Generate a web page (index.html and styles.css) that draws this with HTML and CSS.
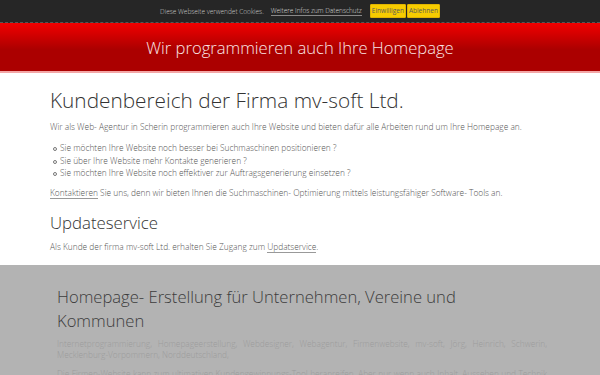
FILE: index.html
```html
<!DOCTYPE html>
<html lang="de">
<head>
    <meta charset="UTF-8">
    <meta name="viewport" content="width=device-width, initial-scale=1.0">
    <title>mv-soft Ltd. - Kundenbereich</title>
    <link rel="stylesheet" href="styles.css">
</head>
<body>
    <div class="cookie-bar">
        <span>Diese Webseite verwendet Cookies.</span>
        <a href="#" class="cookie-link">Weitere Infos zum Datenschutz</a>
        <span class="cookie-buttons">
            <button class="cookie-btn">Einwilligen</button>
            <button class="cookie-btn">Ablehnen</button>
        </span>
    </div>

    <header class="banner">
        <p class="banner-title">Wir programmieren auch Ihre Homepage</p>
    </header>

    <main class="content">
        <h1>Kundenbereich der Firma mv-soft Ltd.</h1>
        <p class="intro">Wir als Web- Agentur in Scherin programmieren auch Ihre Website und bieten dafür alle Arbeiten rund um Ihre Homepage an.</p>
        <ul class="points">
            <li>Sie möchten Ihre Website noch besser bei Suchmaschinen positionieren ?</li>
            <li>Sie über Ihre Website mehr Kontakte generieren ?</li>
            <li>Sie möchten Ihre Website noch effektiver zur Auftragsgenerierung einsetzen ?</li>
        </ul>
        <p><a href="#">Kontaktieren</a> Sie uns, denn wir bieten Ihnen die Suchmaschinen- Optimierung mittels leistungsfähiger Software- Tools an.</p>
        <h2>Updateservice</h2>
        <p>Als Kunde der firma mv-soft Ltd. erhalten Sie Zugang zum <a href="#">Updatservice</a>.</p>
    </main>

    <section class="info">
        <h2>Homepage- Erstellung für Unternehmen, Vereine und Kommunen</h2>
        <p>Internetprogrammierung, Homepageerstellung, Webdesigner, Webagentur, Firmenwebsite, mv-soft, Jörg, Heinrich, Schwerin, Mecklenburg-Vorpommern, Norddeutschland,</p>
        <p>Die Firmen-Website kann zum ultimativen Kundengewinnungs-Tool heranreifen. Aber nur wenn auch Inhalt, Aussehen und Technik stimmen.</p>
    </section>
</body>
</html>
```

FILE: styles.css
```css
body {
    margin: 0;
    font-family: 'Open Sans', sans-serif;
    font-weight: 300;
    color: #555;
    background: #fff;
}

.cookie-bar {
    background-color: #262626;
    color: #ccc;
    font-size: 6.5px;
    height: 22px;
    display: flex;
    justify-content: center;
    align-items: center;
    gap: 7px;
    border-bottom: 1px dashed #555;
}

.cookie-link {
    color: #ddd;
    text-decoration: none;
    border-bottom: 1px solid #888;
}

.cookie-buttons {
    display: flex;
    gap: 1px;
    margin-left: 1px;
}

.cookie-btn {
    background-color: #f7cc00;
    color: #5a5a5a;
    border: 1px solid #e0b400;
    font-family: 'Open Sans', sans-serif;
    font-size: 6.5px;
    padding: 2px 1px;
    line-height: 8px;
    border-radius: 1px;
}

.banner {
    height: 48px;
    background: linear-gradient(#f20000, #ab0000 55%, #ab0000);
    border-bottom: 2px solid #f3a6a6;
    display: flex;
    justify-content: center;
    align-items: center;
}

.banner-title {
    margin: 0;
    color: #fbe6e6;
    font-size: 16.6px;
    font-weight: 300;
}

.content {
    padding: 14px 50px 12px;
    font-size: 8.35px;
    line-height: 12px;
}

.content h1 {
    color: #333;
    font-size: 20.8px;
    line-height: 26px;
    font-weight: 300;
    margin: 0 0 8px;
}

.content h2 {
    color: #333;
    font-size: 16.8px;
    line-height: 22px;
    font-weight: 300;
    margin: 13px 0 7px;
}

.content p {
    margin: 0 0 8px;
}

.content .intro {
    margin-bottom: 9px;
}

.content p:last-child {
    margin-bottom: 0;
}

.content a {
    color: #555;
    text-decoration: none;
    border-bottom: 1px solid #999;
}

.points {
    list-style: none;
    margin: 0 0 7px;
    padding-left: 10px;
    line-height: 12.5px;
}

.points li {
    position: relative;
}

.points li::before {
    content: "";
    position: absolute;
    left: -7px;
    top: 5px;
    width: 2px;
    height: 2px;
    border: 1px solid #777;
    border-radius: 50%;
}

.info {
    background-color: #b3b3b3;
    padding: 20px 53px 0 57px;
    font-size: 8.3px;
    color: #9c9c9c;
    text-align: justify;
    line-height: 11.5px;
}

.info h2 {
    color: #3c3c3c;
    font-size: 16.6px;
    font-weight: 300;
    line-height: 24px;
    text-align: left;
    margin: 0 60px 5px 0;
}

.info p {
    margin: 0 0 7px;
}
```
